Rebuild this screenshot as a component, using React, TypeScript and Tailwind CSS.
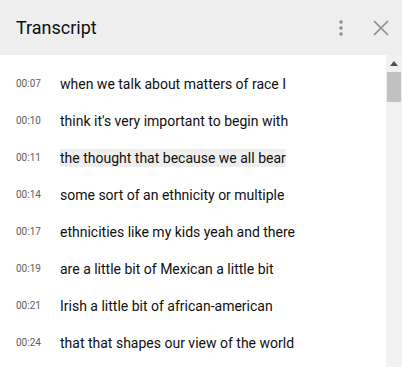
const lines: { time: string; text: string; active?: boolean }[] = [
  { time: "00:07", text: "when we talk about matters of race I" },
  { time: "00:10", text: "think it's very important to begin with" },
  { time: "00:11", text: "the thought that because we all bear", active: true },
  { time: "00:14", text: "some sort of an ethnicity or multiple" },
  { time: "00:17", text: "ethnicities like my kids yeah and there" },
  { time: "00:19", text: "are a little bit of Mexican a little bit" },
  { time: "00:21", text: "Irish a little bit of african-american" },
  { time: "00:24", text: "that that shapes our view of the world" },
];

function DotsIcon() {
  return (
    <svg width="4" height="16" viewBox="0 0 4 16" className="text-[#909090]">
      <circle cx="2" cy="2" r="1.8" fill="currentColor" />
      <circle cx="2" cy="8" r="1.8" fill="currentColor" />
      <circle cx="2" cy="14" r="1.8" fill="currentColor" />
    </svg>
  );
}

function CloseIcon() {
  return (
    <svg width="16" height="16" viewBox="0 0 16 16" className="text-[#8c8c8c]">
      <path d="M1 1L15 15M15 1L1 15" stroke="currentColor" strokeWidth="1.6" />
    </svg>
  );
}

function TranscriptRow({ time, text, active }: { time: string; text: string; active?: boolean }) {
  return (
    <div className="flex h-[37px] items-center">
      <div className="w-[60px] shrink-0 pl-4 text-[10px] text-[#606060]">{time}</div>
      <span
        className={
          active
            ? "whitespace-nowrap bg-[#eeeeee] text-[14px] leading-[18px] text-[#0f0f0f]"
            : "whitespace-nowrap text-[14px] leading-[18px] text-[#0f0f0f]"
        }
      >
        {text}
      </span>
    </div>
  );
}

export default function App() {
  return (
    <div
      className="flex h-[367px] w-[402px] flex-col overflow-hidden bg-white"
      style={{ fontFamily: "Roboto, 'Liberation Sans', sans-serif" }}
    >
      <header className="flex h-[55px] shrink-0 items-center bg-[#eeeeee] pl-4 pr-[13px]">
        <h2 className="flex-1 text-[18px] font-normal text-[#0f0f0f]">Transcript</h2>
        <div className="flex items-center gap-[30px]">
          <DotsIcon />
          <CloseIcon />
        </div>
      </header>

      <div className="flex min-h-0 flex-1">
        <div className="flex-1 overflow-hidden pt-[10px]">
          {lines.map((line) => (
            <TranscriptRow key={line.time} {...line} />
          ))}
        </div>
        <div className="flex w-[16px] shrink-0 flex-col items-center bg-[#f1f1f1]">
          <div className="flex h-[17px] items-center justify-center">
            <svg width="8" height="5" viewBox="0 0 8 5">
              <path d="M0 5L4 0L8 5Z" fill="#505050" />
            </svg>
          </div>
          <div className="h-[30px] w-[14px] bg-[#c1c1c1]" />
        </div>
      </div>
    </div>
  );
}
